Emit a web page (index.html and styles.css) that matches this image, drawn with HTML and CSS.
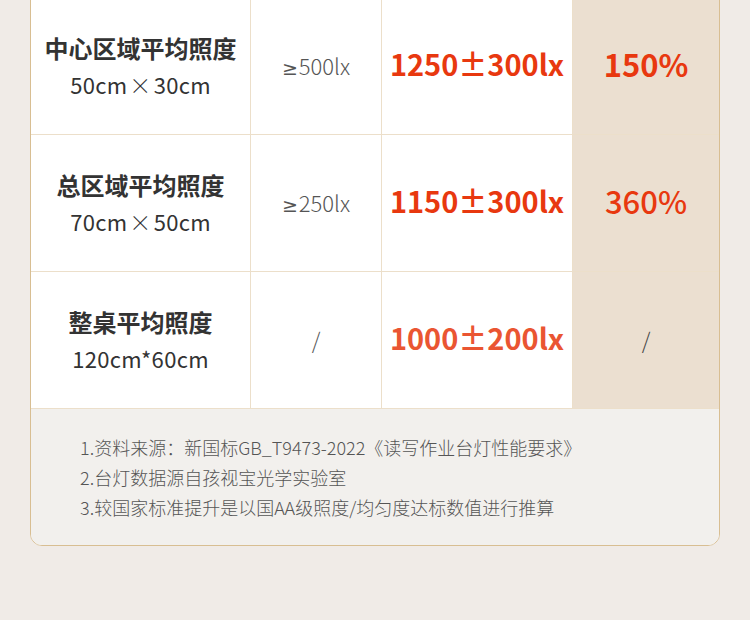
FILE: index.html
```html
<!DOCTYPE html>
<html lang="zh-CN">
<head>
<meta charset="utf-8">
<link rel="stylesheet" href="styles.css">
</head>
<body>
<div class="page">
  <div class="card">
    <div class="row">
      <div class="cell name"><div class="title">中心区域平均照度</div><div class="size">50cm<span class="x">×</span>30cm</div></div>
      <div class="cell std"><div><span class="ge">≥</span>500lx</div></div>
      <div class="cell val">1250±300lx</div>
      <div class="cell pct">150%</div>
    </div>
    <div class="row">
      <div class="cell name"><div class="title">总区域平均照度</div><div class="size">70cm<span class="x">×</span>50cm</div></div>
      <div class="cell std"><div><span class="ge">≥</span>250lx</div></div>
      <div class="cell val">1150±300lx</div>
      <div class="cell pct medium">360%</div>
    </div>
    <div class="row">
      <div class="cell name"><div class="title">整桌平均照度</div><div class="size">120cm*60cm</div></div>
      <div class="cell std">/</div>
      <div class="cell val light">1000±200lx</div>
      <div class="cell pct slash">/</div>
    </div>
    <div class="notes">
      <p>1.资料来源：新国标GB_T9473-2022《读写作业台灯性能要求》</p>
      <p>2.台灯数据源自孩视宝光学实验室</p>
      <p>3.较国家标准提升是以国AA级照度/均匀度达标数值进行推算</p>
    </div>
  </div>
</div>
</body>
</html>
```

FILE: styles.css
```css
html, body {
  margin: 0;
  padding: 0;
  background: #f0ebe7;
}
body {
  font-family: "Noto Sans CJK SC", "Noto Sans", sans-serif;
  width: 750px;
  height: 620px;
  overflow: hidden;
}
.page {
  padding: 0 30px;
}
.card {
  margin-top: -3px;
  border: 1px solid #d8be92;
  border-radius: 0 0 12px 12px;
  overflow: hidden;
  background: #ffffff;
}
.row {
  display: grid;
  grid-template-columns: 219px 130px 190px 146px;
  column-gap: 1px;
  background: #ecdfca;
  border-bottom: 1px solid #ecdfca;
  height: 136px;
}
.cell {
  background: #ffffff;
  display: flex;
  flex-direction: column;
  align-items: center;
  justify-content: center;
  text-align: center;
}
.title {
  font-size: 24px;
  font-weight: 700;
  color: #333333;
  line-height: 36px;
}
.size {
  font-size: 22px;
  font-weight: 400;
  color: #333333;
  line-height: 36px;
  letter-spacing: 0.3px;
}
.x {
  font-weight: 300;
  margin: 0 2px;
}
.std {
  font-size: 22px;
  font-weight: 300;
  color: #555555;
  padding-bottom: 2px;
}
.ge {
  font-family: "DejaVu Sans", sans-serif;
  font-weight: 400;
  font-size: 19px;
  margin-right: 1px;
}
.val {
  font-size: 29px;
  font-weight: 700;
  color: #e8380f;
  padding-bottom: 6px;
}
.val.light {
  color: #ea5532;
}
.pct {
  background: #ebdfd0;
  font-size: 31px;
  font-weight: 700;
  color: #e8380f;
  padding-bottom: 6px;
}
.pct.medium {
  font-weight: 500;
}
.pct.slash {
  font-size: 22px;
  font-weight: 300;
  color: #444444;
  padding-bottom: 2px;
}
.notes {
  background: #f2f0ed;
  height: 136px;
  box-sizing: border-box;
  padding: 23px 0 0 49px;
}
.notes p {
  margin: 0;
  font-size: 18px;
  font-weight: 300;
  line-height: 30px;
  color: #555555;
}
```
